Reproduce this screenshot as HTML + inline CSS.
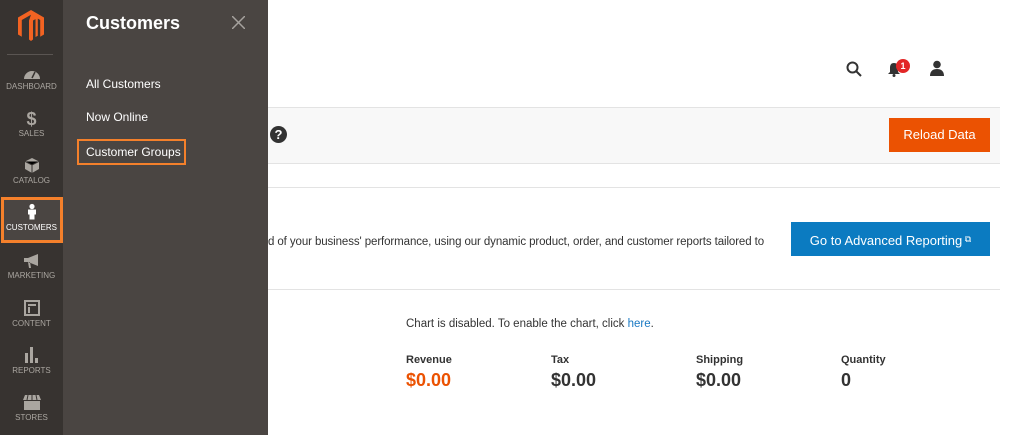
<!DOCTYPE html>
<html><head><style>
*{margin:0;padding:0;box-sizing:border-box}
body{width:1024px;height:435px;overflow:hidden;background:#fff;font-family:"Liberation Sans",sans-serif;position:relative}
.a{position:absolute}
#bar{left:0;top:0;width:63px;height:435px;background:#373330}
#pan{left:63px;top:0;width:205px;height:435px;background:#4a4542}
.ni{position:absolute;left:0;width:63px;text-align:center;color:#aaa6a0;font-size:8px}
.ni svg{display:block;margin:0 auto 3px}
.sub{position:absolute;left:86px;color:#fff;font-size:12px}
</style></head><body>
<div class="a" style="left:268px;top:107px;width:732px;height:57px;background:#f8f8f8;border-top:1px solid #e3e3e3;border-bottom:1px solid #e3e3e3"></div>
<div class="a" style="left:268px;top:187px;width:732px;height:1px;background:#e3e3e3"></div>
<div class="a" style="left:268px;top:289px;width:732px;height:1px;background:#e3e3e3"></div>
<div id="bar" class="a">
<svg class="a" style="left:18px;top:10px" width="26" height="32" viewBox="0 0 26 32"><path d="M13 0L0 7.5V24.5l3.8 2.2V10L13 4.7 22.2 10v16.7L26 24.5V7.5z M11 10.5V29.5L13 31l2-1.5V10.5l2.5-1.4V27l2.3-1.3V8L13 4.7" fill="#f26322"/></svg>
<div class="a" style="left:7px;top:54px;width:46px;height:1px;background:#5a5552"></div>
<div class="ni" style="top:68px"><svg width="16" height="11" viewBox="0 0 16 11"><path d="M0 11A8 8 0 0 1 16 11z" fill="#aaa6a0"/><path d="M8 10L11 4" stroke="#373330" stroke-width="1.5"/></svg>DASHBOARD</div>
<div class="ni" style="top:110px"><div style="font-size:18px;font-weight:bold;line-height:19px">$</div>SALES</div>
<div class="ni" style="top:158px"><svg width="14" height="15" viewBox="0 0 14 15"><path d="M7 0L14 3.5V11L7 15 0 11V3.5z" fill="#aaa6a0"/><path d="M0 3.5L7 7 14 3.5M7 7V15" stroke="#373330"/></svg>CATALOG</div>
<div class="a" style="left:1px;top:197px;width:62px;height:46px;border:3px solid #f4802b;background:#4a4542"></div>
<div class="ni" style="top:203px;color:#fff"><svg width="10" height="17" viewBox="0 0 10 16"><circle cx="5" cy="3" r="2.6" fill="#fff"/><path d="M1 6h8v5H7.5v5h-5v-5H1z" fill="#fff"/></svg>CUSTOMERS</div>
<div class="ni" style="top:254px"><svg width="18" height="14" viewBox="0 0 18 14"><path d="M1 4h4l10-4v12L5 8H1z M5 8l1 6h2l-1-6" fill="#aaa6a0"/></svg>MARKETING</div>
<div class="ni" style="top:300px"><svg width="16" height="16" viewBox="0 0 16 16"><rect x="1" y="1" width="14" height="14" fill="none" stroke="#aaa6a0" stroke-width="2"/><rect x="4" y="4" width="8" height="2" fill="#aaa6a0"/><rect x="4" y="7" width="2" height="6" fill="#aaa6a0"/></svg>CONTENT</div>
<div class="ni" style="top:347px"><svg width="16" height="16" viewBox="0 0 16 16"><rect x="1" y="6" width="3" height="10" fill="#aaa6a0"/><rect x="6" y="0" width="3" height="16" fill="#aaa6a0"/><rect x="11" y="11" width="3" height="5" fill="#aaa6a0"/></svg>REPORTS</div>
<div class="ni" style="top:395px"><svg width="18" height="15" viewBox="0 0 18 15"><path d="M2 0h14l2 5H0z M1 6h16v9H1z" fill="#aaa6a0"/><path d="M5 0L4 5M9 0v5M13 0l1 5" stroke="#373330"/></svg>STORES</div>
</div>
<div id="pan" class="a"></div>
<div class="a" style="left:86px;top:13px;color:#fff;font-size:18px;font-weight:bold">Customers</div>
<svg class="a" style="left:232px;top:16px" width="13" height="13"><path d="M0 0L13 13M13 0L0 13" stroke="#a6a29e" stroke-width="1.5"/></svg>
<div class="sub" style="top:77px">All Customers</div>
<div class="sub" style="top:110px">Now Online</div>
<div class="a" style="left:77px;top:139px;width:109px;height:26px;border:2px solid #f4802b"></div>
<div class="sub" style="top:145px">Customer Groups</div>
<svg class="a" style="left:846px;top:61px" width="16" height="16"><circle cx="6.5" cy="6.5" r="5" fill="none" stroke="#333" stroke-width="2"/><path d="M10 10L15 15" stroke="#333" stroke-width="2"/></svg>
<svg class="a" style="left:887px;top:62px" width="14" height="15"><path d="M7 1C4 1 3 3 3 6v4l-2 2h12l-2-2V6c0-3-1-5-4-5z" fill="#333"/><circle cx="7" cy="13.5" r="1.5" fill="#333"/></svg>
<div class="a" style="left:896px;top:59px;width:14px;height:14px;border-radius:50%;background:#e22626;color:#fff;font-size:9px;font-weight:bold;text-align:center;line-height:14px">1</div>
<svg class="a" style="left:929px;top:60px" width="16" height="16"><circle cx="8" cy="4.5" r="3.8" fill="#333"/><path d="M1 16c0-5 3-7 7-7s7 2 7 7z" fill="#333"/></svg>
<div class="a" style="left:270px;top:126px;width:17px;height:17px;border-radius:50%;background:#333;color:#fff;font-size:13px;font-weight:bold;text-align:center;line-height:17px">?</div>
<div class="a" style="left:889px;top:118px;width:101px;height:34px;background:#eb5202;color:#fff;font-size:13px;text-align:center;line-height:34px">Reload Data</div>
<div class="a" style="left:268px;top:236px;color:#333;font-size:11.5px;white-space:nowrap;letter-spacing:-0.1px">d of your business' performance, using our dynamic product, order, and customer reports tailored to</div>
<div class="a" style="left:791px;top:222px;width:199px;height:34px;background:#0b7bc1;color:#fff;font-size:13px;text-align:center;line-height:34px">Go to Advanced Reporting<span style="font-size:9px;vertical-align:3px"> &#x29C9;</span></div>
<div class="a" style="left:406px;top:318px;color:#333;font-size:11.5px">Chart is disabled. To enable the chart, click <span style="color:#1979c3">here</span>.</div>
<div class="a" style="left:406px;top:354px;color:#333;font-size:11px;font-weight:bold">Revenue</div>
<div class="a" style="left:406px;top:370px;color:#eb5202;font-size:18px;font-weight:bold">$0.00</div>
<div class="a" style="left:551px;top:354px;color:#333;font-size:11px;font-weight:bold">Tax</div>
<div class="a" style="left:551px;top:370px;color:#333;font-size:18px;font-weight:bold">$0.00</div>
<div class="a" style="left:696px;top:354px;color:#333;font-size:11px;font-weight:bold">Shipping</div>
<div class="a" style="left:696px;top:370px;color:#333;font-size:18px;font-weight:bold">$0.00</div>
<div class="a" style="left:841px;top:354px;color:#333;font-size:11px;font-weight:bold">Quantity</div>
<div class="a" style="left:841px;top:370px;color:#333;font-size:18px;font-weight:bold">0</div>
</body></html>
